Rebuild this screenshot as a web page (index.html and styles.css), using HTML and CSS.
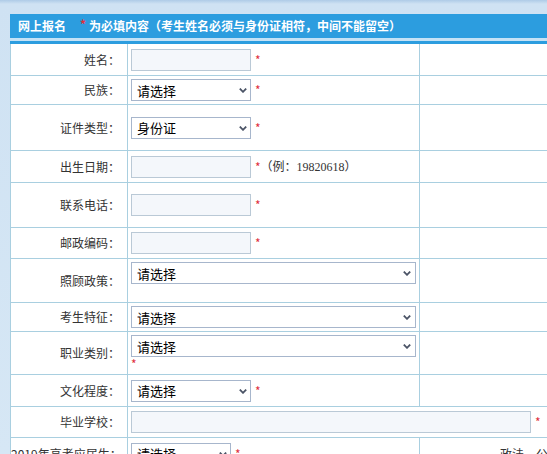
FILE: index.html
```html
<!DOCTYPE html>
<html lang="zh-CN">
<head>
<meta charset="utf-8">
<title>网上报名</title>
<link rel="stylesheet" href="styles.css">
</head>
<body>
<div class="page">
  <div class="box">
    <div class="title">网上报名<span class="title-req">*</span>为必填内容（考生姓名必须与身份证相符，中间不能留空）</div>
    <div class="gap"></div>
    <table class="form">
      <colgroup><col class="c1"><col class="c2"><col class="c3"></colgroup>
      <tr class="h33"><th>姓名：</th><td><input class="txt" type="text"><span class="req">*</span></td><td></td></tr>
      <tr class="h29"><th>民族：</th><td><span class="sel"><select class="sel-s"><option>请选择</option></select><svg class="arrow" width="8" height="5" viewBox="0 0 8 5"><path d="M0.8 0.6 L4 3.8 L7.2 0.6" fill="none" stroke="#4b5466" stroke-width="1.8"/></svg></span><span class="req">*</span></td><td></td></tr>
      <tr class="h46"><th>证件类型：</th><td><span class="sel"><select class="sel-s"><option>身份证</option></select><svg class="arrow" width="8" height="5" viewBox="0 0 8 5"><path d="M0.8 0.6 L4 3.8 L7.2 0.6" fill="none" stroke="#4b5466" stroke-width="1.8"/></svg></span><span class="req">*</span></td><td></td></tr>
      <tr class="h32"><th>出生日期：</th><td><input class="txt" type="text"><span class="req">*</span><span class="hint">（例：19820618）</span></td><td></td></tr>
      <tr class="h45"><th>联系电话：</th><td><input class="txt" type="text"><span class="req">*</span></td><td></td></tr>
      <tr class="h31"><th>邮政编码：</th><td><input class="txt" type="text"><span class="req">*</span></td><td></td></tr>
      <tr class="h44"><th>照顾政策：</th><td class="stack-cell"><div class="stack"><span class="sel"><select class="sel-w"><option>请选择</option></select><svg class="arrow arrow-w" width="8" height="5" viewBox="0 0 8 5"><path d="M0.8 0.6 L4 3.8 L7.2 0.6" fill="none" stroke="#4b5466" stroke-width="1.8"/></svg></span><div class="below"></div></div></td><td></td></tr>
      <tr class="h29"><th>考生特征：</th><td><span class="sel"><select class="sel-w"><option>请选择</option></select><svg class="arrow arrow-w" width="8" height="5" viewBox="0 0 8 5"><path d="M0.8 0.6 L4 3.8 L7.2 0.6" fill="none" stroke="#4b5466" stroke-width="1.8"/></svg></span></td><td></td></tr>
      <tr class="h43"><th>职业类别：</th><td class="stack-cell"><div class="stack"><span class="sel"><select class="sel-w"><option>请选择</option></select><svg class="arrow arrow-w" width="8" height="5" viewBox="0 0 8 5"><path d="M0.8 0.6 L4 3.8 L7.2 0.6" fill="none" stroke="#4b5466" stroke-width="1.8"/></svg></span><div class="below"><span class="req req-below">*</span></div></div></td><td></td></tr>
      <tr class="h32"><th>文化程度：</th><td><span class="sel"><select class="sel-s"><option>请选择</option></select><svg class="arrow" width="8" height="5" viewBox="0 0 8 5"><path d="M0.8 0.6 L4 3.8 L7.2 0.6" fill="none" stroke="#4b5466" stroke-width="1.8"/></svg></span><span class="req">*</span></td><td></td></tr>
      <tr class="h31"><th>毕业学校：</th><td colspan="2"><input class="txt txt-long" type="text"><span class="req">*</span></td></tr>
      <tr class="h32"><th class="nowrap">2019年高考应届生：</th><td><span class="sel"><select class="sel-m"><option>请选择</option></select><svg class="arrow" width="8" height="5" viewBox="0 0 8 5"><path d="M0.8 0.6 L4 3.8 L7.2 0.6" fill="none" stroke="#4b5466" stroke-width="1.8"/></svg></span><span class="req">*</span></td><td class="side-note">政法、公安类院校：</td></tr>
      <tr class="h32"><th>政治面貌：</th><td></td><td></td></tr>
    </table>
  </div>
</div>
</body>
</html>
```

FILE: styles.css
```css
html, body {
  margin: 0;
  overflow: hidden;
}

body {
  background: linear-gradient(to bottom, #aecbe7 0, #cfe2f3 4px, #d6e7f5 100%);
  font-family: "Noto Sans CJK SC", "Noto Sans", sans-serif;
  font-size: 12px;
  color: #333;
  height: 454px;
}

.page {
  padding: 14px 0 0 10px;
}

.box {
  width: 600px;
  background: #fff;
}

.title {
  height: 24px;
  line-height: 24px;
  background: #2c9ddf;
  color: #fff;
  font-weight: bold;
  padding-left: 8px;
  white-space: nowrap;
  overflow: hidden;
}

.title-req {
  color: #e0303c;
  margin: 0 3px 0 14px;
  vertical-align: top;
  line-height: 20px;
}

.gap {
  height: 3px;
  background: #c4e2f6;
}

.form {
  border-collapse: collapse;
  table-layout: fixed;
  width: 600px;
  border-top: 3px solid #2c9ddf;
}

.c1 { width: 117px; }
.c2 { width: 292px; }

.form th,
.form td {
  border: 1px solid #a9cfe0;
  padding: 0;
  vertical-align: middle;
  white-space: nowrap;
  overflow: hidden;
  line-height: 14px;
}

.form th {
  font-weight: normal;
  text-align: right;
  padding-right: 7px;
  color: #333;
}

.form td {
  padding-left: 3px;
}

.form th.nowrap {
  overflow: visible;
}

.h29 { height: 29px; }
.h31 { height: 31px; }
.h32 { height: 32px; }
.h33 { height: 33px; }
.h43 { height: 43px; }
.h44 { height: 44px; }
.h45 { height: 45px; }
.h46 { height: 46px; }

.txt {
  box-sizing: border-box;
  width: 120px;
  height: 22px;
  border: 1px solid #bac9d6;
  background: #f4f7fb;
  margin: 0;
  padding: 0 4px;
  vertical-align: middle;
  font: inherit;
}

.txt-long {
  width: 400px;
}

.sel {
  position: relative;
  display: inline-block;
  vertical-align: middle;
}

.sel select {
  appearance: none;
  -webkit-appearance: none;
  box-sizing: border-box;
  height: 22px;
  border: 1px solid #a7b6cc;
  background: #fff;
  margin: 0;
  padding: 0 0 0 5px;
  font-family: "Noto Sans CJK SC", sans-serif;
  font-size: 13px;
  color: #000;
  display: block;
  border-radius: 0;
}

.sel-s { width: 120px; }
.sel-m { width: 100px; }
.sel-w { width: 285px; }

.arrow {
  position: absolute;
  right: 4px;
  top: 9px;
  pointer-events: none;
}

.arrow-w {
  right: 5px;
}

.req {
  color: #e0303c;
  font-size: 12px;
  margin-left: 4px;
  vertical-align: middle;
}

.hint {
  vertical-align: middle;
  font-family: "Liberation Serif", "Noto Sans CJK SC", serif;
  font-size: 12px;
  color: #333;
}

.form td.stack-cell {
  vertical-align: top;
}

.stack {
  padding-top: 3px;
}

.below {
  height: 17px;
  line-height: 14px;
}

.req-below {
  margin-left: 0;
  vertical-align: top;
}

.form td.side-note {
  padding-left: 80px;
  color: #333;
}
```
